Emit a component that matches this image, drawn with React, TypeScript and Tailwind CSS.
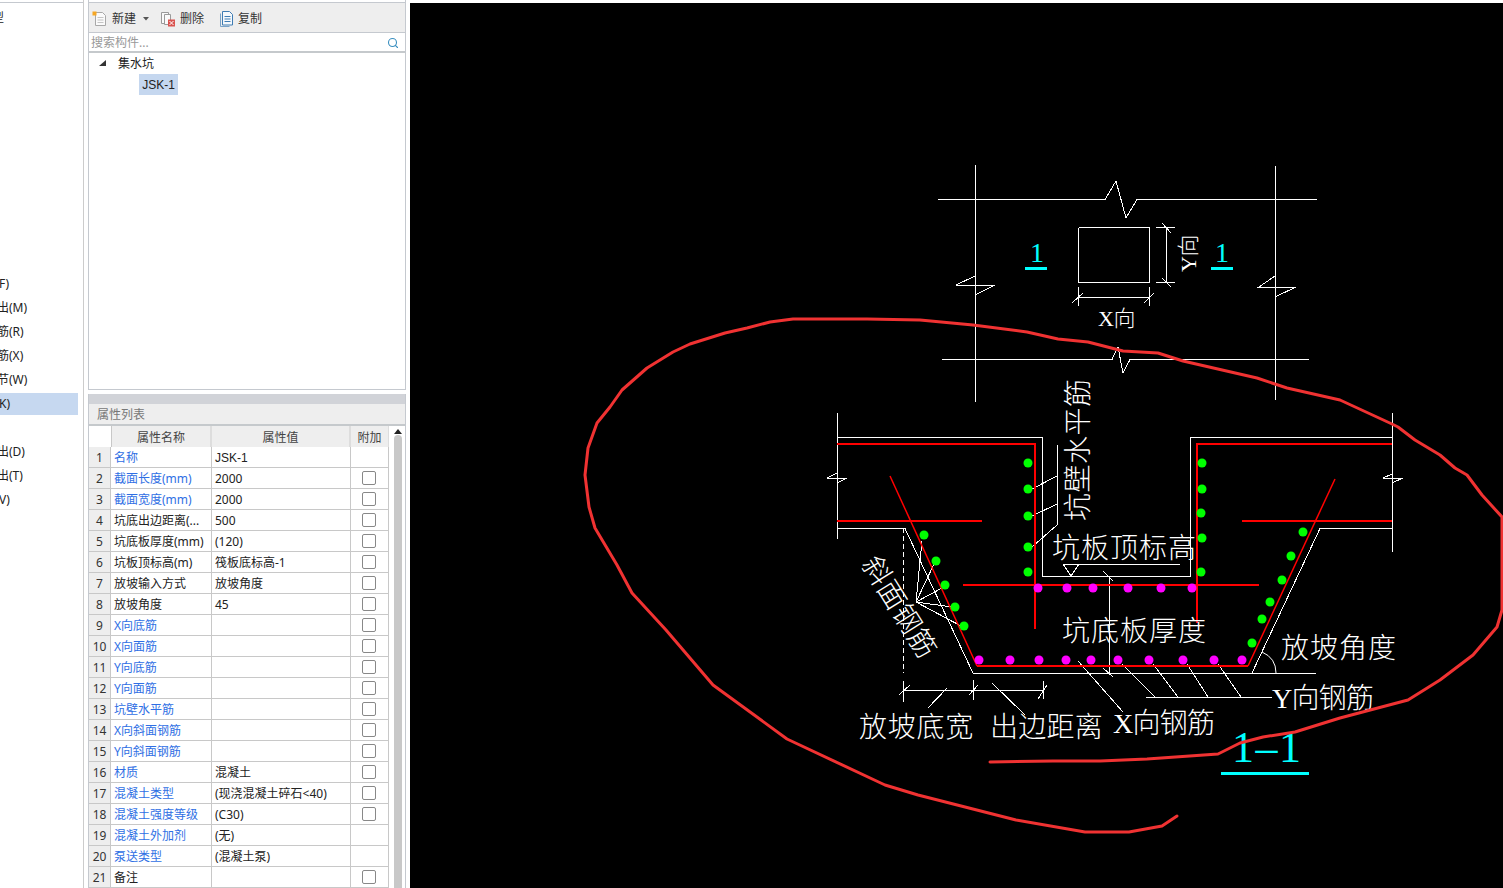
import React from "react";
import { Search } from "lucide-react";

const rows = [
  { name: "名称", value: "JSK-1", blue: true, box: false },
  { name: "截面长度(mm)", value: "2000", blue: true, box: true },
  { name: "截面宽度(mm)", value: "2000", blue: true, box: true },
  { name: "坑底出边距离(...", value: "500", blue: false, box: true },
  { name: "坑底板厚度(mm)", value: "(120)", blue: false, box: true },
  { name: "坑板顶标高(m)", value: "筏板底标高-1", blue: false, box: true },
  { name: "放坡输入方式", value: "放坡角度", blue: false, box: true },
  { name: "放坡角度", value: "45", blue: false, box: true },
  { name: "X向底筋", value: "", blue: true, box: true },
  { name: "X向面筋", value: "", blue: true, box: true },
  { name: "Y向底筋", value: "", blue: true, box: true },
  { name: "Y向面筋", value: "", blue: true, box: true },
  { name: "坑壁水平筋", value: "", blue: true, box: true },
  { name: "X向斜面钢筋", value: "", blue: true, box: true },
  { name: "Y向斜面钢筋", value: "", blue: true, box: true },
  { name: "材质", value: "混凝土", blue: true, box: true },
  { name: "混凝土类型", value: "(现浇混凝土碎石<40)", blue: true, box: true },
  { name: "混凝土强度等级", value: "(C30)", blue: true, box: true },
  { name: "混凝土外加剂", value: "(无)", blue: true, box: false },
  { name: "泵送类型", value: "(混凝土泵)", blue: true, box: false },
  { name: "备注", value: "", blue: false, box: true },
];

// white CAD linework, in page coordinates
const whiteLines = [
  "938,199.5 1105,199.5 1116,181 1126,218 1137,199.5 1317,199.5",
  "942,359.5 1112,359.5 1118,347 1123,373 1130,359.5 1309,359.5",
  "975.5,165 975.5,402",
  "1275.5,166 1275.5,400",
  "975,276 956,285 995,285 975,295",
  "1275,276 1259,287 1296,287 1275,297",
  "1078.5,227.5 1149.5,227.5 1149.5,282.5 1078.5,282.5 1078.5,227.5",
  "1166,227 1166,283",
  "1156,227.5 1175,227.5",
  "1156,282.5 1175,282.5",
  "1162,223 1171,233",
  "1162,278 1171,287",
  "1078,297 1150,297",
  "1078.5,287 1078.5,306",
  "1149.5,287 1149.5,306",
  "1072,303 1083,293",
  "1144,303 1154,293",
  "837.5,413 837.5,539",
  "837,473 827,478 847,478 837,483",
  "837,437.5 1042.5,437.5 1042.5,576.5 1190.5,576.5 1190.5,437.5 1392,437.5",
  "837,528.5 905,528.5 973,673 1316,673",
  "1392,528.5 1320,528.5 1252,673",
  "1392.5,413 1392.5,552",
  "1392,474 1383,478 1403,478 1392,483",
  "1057,445 1057,525 1032,547",
  "1057,476 1032,489",
  "1057,504 1032,516",
  "1063,564 1180,564",
  "1063,564 1071,576 1079,564",
  "1109.5,577 1109.5,673",
  "1103,571 1113,581",
  "1103,668 1113,677",
  "922,541 916,602",
  "934,564 916,602",
  "942,588 916,602",
  "952,607 916,602",
  "961,626 916,602",
  "903,690 1043,690",
  "903,681 903,702",
  "973.5,680 973.5,700",
  "1043,681 1043,699",
  "899,695 910,685",
  "969,695 978,685",
  "1038,699 1047,685",
  "947,688 928,708",
  "992,683 1025,715",
  "1078,661 1123,712",
  "1146,697 1272,697",
  "1122,664 1155,697",
  "1153,664 1178,697",
  "1187,664 1208,697",
  "1218,664 1241,697",
];

const redThick = [
  "837,444 1035,444 1035,629",
  "1392,444 1197,444 1197,623",
  "963,585 1259,585",
  "837,521 982,521",
  "1242,521 1392,521",
  "977,666 1248,666",
];

const redThin = ["890,476 977,666", "1248,666 1335,479"];

const greenDots = [
  [1028, 463], [1028, 489], [1028, 516], [1028, 547], [1028, 572],
  [1202, 463], [1202, 489], [1201, 513], [1202, 538], [1201, 572],
  [924, 535], [936, 561], [945, 585], [955, 607], [964, 626],
  [1303, 532], [1291, 556], [1282, 580], [1270, 602], [1262, 619], [1252, 643],
];

const pinkDots = [
  [1038, 588], [1067, 588], [1093, 588], [1128, 588], [1161, 588], [1192, 588],
  [979, 660], [1010, 660], [1039, 660], [1066, 660], [1091, 660], [1118, 660],
  [1149, 660], [1183, 660], [1214, 660], [1242, 660],
];

// the hand-drawn marker loop
const marker =
  "1177,816 1162,826 1129,832 1085,832 1016,820 918,795 885,785 787,739 713,685 666,630 632,593 617,565 595,528 589,507 585,475 588,448 597,423 610,407 622,390 647,368 673,352 690,344 725,333 747,328 770,322 793,319 867,319 920,320 973,325 1027,332 1058,339 1088,342 1123,351 1158,353 1183,361 1257,378 1287,388 1340,400 1392,424 1398,427 1415,440 1440,455 1455,468 1467,475 1482,495 1502,517 1502,610 1497,627 1473,655 1440,680 1408,700 1340,718 1295,732 1263,737 1240,743 1218,754 1147,759 1100,761 1053,761 990,762";

const labels = [
  { text: "坑板顶标高", x: 1052, y: 558, gap: 1 },
  { text: "坑底板厚度", x: 1062, y: 641, gap: 1 },
  { text: "放坡角度", x: 1281, y: 658, gap: 1 },
  { text: "Y向钢筋", x: 1272, y: 708, gap: -0.75 },
  { text: "X向钢筋", x: 1113, y: 733, gap: -0.75 },
  { text: "放坡底宽", x: 859, y: 737, gap: 0.75 },
  { text: "出边距离", x: 990, y: 737, gap: 0.25 },
];

function Drawing() {
  return (
    <svg viewBox="410 3 1093 885" className="block h-[885px] w-[1093px]">
      <g fill="none" stroke="#ffffff" strokeWidth="1" shapeRendering="crispEdges">
        {whiteLines.map((p) => (
          <polyline key={p} points={p} />
        ))}
        <line x1="903" y1="528" x2="903" y2="673" strokeDasharray="5 3" />
        <path d="M1262 652 Q1276 658 1276 673" shapeRendering="auto" />
      </g>
      <g fill="none" stroke="#ff0000" strokeWidth="2.5" shapeRendering="crispEdges">
        {redThick.map((p) => (
          <polyline key={p} points={p} />
        ))}
      </g>
      <g fill="none" stroke="#ff0000" strokeWidth="1.5">
        {redThin.map((p) => (
          <polyline key={p} points={p} />
        ))}
      </g>
      {greenDots.map(([x, y]) => (
        <circle key={`${x}-${y}`} cx={x} cy={y} r="4.5" fill="#00ff00" />
      ))}
      {pinkDots.map(([x, y]) => (
        <circle key={`${x}-${y}`} cx={x} cy={y} r="4.5" fill="#ff00ff" />
      ))}

      <g
        fill="#ffffff"
        fontWeight="300"
        fontSize="28"
        className="font-['Liberation_Serif','Noto_Sans_CJK_SC',serif]"
      >
        {labels.map((l) => (
          <text key={l.text} x={l.x} y={l.y} letterSpacing={l.gap}>
            {l.text}
          </text>
        ))}
        <text transform="translate(1088 521) rotate(-90)" letterSpacing="0.5">
          坑壁水平筋
        </text>
        <text transform="translate(861 564) rotate(58)" letterSpacing="0.5">
          斜面钢筋
        </text>
        <text x="1098" y="326" fontSize="22" letterSpacing="-0.5">
          X向
        </text>
        <text transform="translate(1196 272) rotate(-90)" fontSize="22" letterSpacing="-0.5">
          Y向
        </text>
      </g>

      <g fill="#00ffff" className="font-['Liberation_Serif',serif]">
        <text x="1030" y="262" fontSize="28">
          1
        </text>
        <text x="1215" y="262" fontSize="28">
          1
        </text>
        <text x="1232" y="762" fontSize="44" letterSpacing="1.5">
          1–1
        </text>
      </g>
      <g fill="#00ffff">
        <rect x="1025" y="267" width="22" height="3" />
        <rect x="1211" y="267" width="22" height="3" />
        <rect x="1221" y="772" width="88" height="3" />
      </g>

      <polyline
        points={marker}
        fill="none"
        stroke="#f03232"
        strokeWidth="3"
        strokeLinejoin="round"
        strokeLinecap="round"
      />
    </svg>
  );
}

function NewIcon() {
  return (
    <svg width="16" height="16" viewBox="0 0 16 16" fill="none">
      <path d="M3.5 1.5h7l3 3v10h-10z" fill="#fafafa" stroke="#a8a8a8" />
      <path d="M5.5 6.5h6M5.5 9h6M5.5 11.5h6" stroke="#c4c4c4" />
      <rect x="0.5" y="0.5" width="4" height="4" fill="#f5a623" />
    </svg>
  );
}

function DeleteIcon() {
  return (
    <svg width="16" height="16" viewBox="0 0 16 16" fill="none">
      <path d="M1.5 1.5h7v11h-7z" fill="#fafafa" stroke="#9a9a9a" />
      <path d="M4.5 3.5h6v10h-6z" fill="#fafafa" stroke="#9a9a9a" />
      <rect x="8" y="8.5" width="7" height="7" fill="#d9534f" />
      <path d="M9.5 10l4 4M13.5 10l-4 4" stroke="#ffffff" />
    </svg>
  );
}

function CopyIcon() {
  return (
    <svg width="14" height="16" viewBox="0 0 14 16" fill="none">
      <path d="M0.5 2.5v13h9" stroke="#7aa3c8" />
      <path d="M2.5 0.5h7l3 3v10.5h-10z" fill="#f4f8fc" stroke="#3f7cb3" />
      <path d="M4.5 5.5h6M4.5 8h6M4.5 10.5h6" stroke="#3f7cb3" />
    </svg>
  );
}

function SideItem({ text, shift, selected }: { text: string; shift: string; selected?: boolean }) {
  return (
    <div className="h-6 flex items-center">
      <div className={`w-[78px] h-[22px] flex items-center overflow-hidden ${selected ? "bg-[#c6d8f0]" : ""}`}>
        <span className={`whitespace-nowrap ${shift}`}>{text}</span>
      </div>
    </div>
  );
}

function Sidebar() {
  return (
    <div className="w-[84px] shrink-0 border-r border-[#cccccc] text-xs text-[#222222]">
      <div className="mt-[2px] h-px bg-[#c5c9cf]" />
      <div className="mt-[3px] h-6 flex items-center overflow-hidden">
        <span className="-ml-[8px]">型</span>
      </div>
      <div className="h-[242px]" />
      <SideItem text="F)" shift="-ml-[1px]" />
      <SideItem text="出(M)" shift="-ml-[3px]" />
      <SideItem text="筋(R)" shift="-ml-[3px]" />
      <SideItem text="筋(X)" shift="-ml-[3px]" />
      <SideItem text="节(W)" shift="-ml-[3px]" />
      <SideItem text="K)" shift="-ml-[1px]" selected />
      <div className="h-6" />
      <SideItem text="出(D)" shift="-ml-[3px]" />
      <SideItem text="出(T)" shift="-ml-[3px]" />
      <SideItem text="V)" shift="-ml-[1px]" />
    </div>
  );
}

function ComponentPanel() {
  return (
    <div className="h-[390px] flex flex-col border-x border-b border-[#c5c9cf]">
      <div className="mt-[2px] h-px bg-[#c5c9cf]" />
      <div className="h-[30px] pt-[2px] flex items-center bg-[#eeeeee] border-b border-[#c5c9cf] text-xs text-[#333333]">
        <span className="ml-[3px] flex items-center gap-[4px]">
          <NewIcon />
          新建
        </span>
        <svg width="6" height="4" viewBox="0 0 6 4" className="ml-[7px]">
          <path d="M0 0h6L3 3.5z" fill="#555555" />
        </svg>
        <span className="ml-[11px] flex items-center gap-[4px]">
          <DeleteIcon />
          删除
        </span>
        <span className="ml-[16px] flex items-center gap-[4px]">
          <CopyIcon />
          复制
        </span>
      </div>
      <div className="h-[20px] pt-px flex items-center justify-between pl-[2px] pr-[6px] text-xs text-[#999999] border-b-2 border-[#c5c9cc]">
        <span>搜索构件...</span>
        <Search size={12} strokeWidth={2.2} className="text-[#3a8fc0]" />
      </div>
      <div className="flex-1 text-xs text-[#222222]">
        <div className="h-[21px] flex items-center">
          <svg width="7" height="7" viewBox="0 0 7 7" className="ml-[10px]">
            <path d="M7 0v6H0z" fill="#333333" />
          </svg>
          <span className="ml-[12px]">集水坑</span>
        </div>
        <div className="ml-[50px] w-[39px] h-[21px] flex items-center justify-center bg-[#c5d7ef] font-['Liberation_Sans',sans-serif]">
          JSK-1
        </div>
      </div>
    </div>
  );
}

function PropertyTable() {
  return (
    <div className="flex-1 flex min-h-0">
      <div className="w-[300px] shrink-0 text-xs">
        <div className="h-[21px] flex text-center text-[#444444]">
          <div className="w-[22px] shrink-0" />
          <div className="w-[101px] shrink-0 pt-[2px] bg-[#eeeeee] border-r-2 border-[#dddddd] border-l border-l-[#c8c8c8] flex items-center justify-center">
            属性名称
          </div>
          <div className="w-[139px] shrink-0 pt-[2px] bg-[#eeeeee] border-r-2 border-[#dddddd] flex items-center justify-center">
            属性值
          </div>
          <div className="flex-1 pt-[2px] bg-[#eeeeee] flex items-center justify-center border-r border-[#dddddd]">
            附加
          </div>
        </div>
        {rows.map((r, i) => (
          <div key={r.name} className="h-[21px] flex border-b border-[#c8c8c8]">
            <div className="w-[22px] shrink-0 pt-px bg-[#eeeeee] border-r border-[#c8c8c8] flex items-center justify-center text-[#333333]">
              {i + 1}
            </div>
            <div
              className={`w-[101px] shrink-0 pt-px border-r border-[#c8c8c8] pl-[3px] flex items-center whitespace-nowrap overflow-hidden ${
                r.blue ? "text-[#2f6fe4]" : "text-[#222222]"
              }`}
            >
              {r.name}
            </div>
            <div
              className={`w-[139px] shrink-0 pt-px border-r border-[#c8c8c8] pl-[3px] flex items-center whitespace-nowrap overflow-hidden text-[#222222] ${
                r.value === "JSK-1" ? "font-['Liberation_Sans',sans-serif]" : ""
              }`}
            >
              {r.value}
            </div>
            <div className="flex-1 pr-[2px] border-r border-[#c8c8c8] flex items-center justify-center">
              {r.box && <div className="w-[14px] h-[14px] rounded-[2px] border border-[#888888] bg-white" />}
            </div>
          </div>
        ))}
      </div>
      <div className="flex-1 flex flex-col items-center pt-[3px] pl-[2px]">
        <svg width="8" height="5" viewBox="0 0 8 5">
          <path d="M0 5L4 0l4 5z" fill="#222222" />
        </svg>
        <div className="mt-[1px] w-2 flex-1 rounded-t-[4px] bg-[#c8c8c8]" />
      </div>
    </div>
  );
}

export default function App() {
  return (
    <div className="w-[1503px] h-[888px] flex overflow-hidden bg-white font-['Noto_Sans','Noto_Sans_CJK_SC',sans-serif]">
      <Sidebar />
      <div className="ml-[4px] w-[318px] shrink-0 flex flex-col">
        <ComponentPanel />
        <div className="mt-[4px] flex-1 min-h-0 flex flex-col border-x border-[#c5c9cf]">
          <div className="h-[10px] bg-[#d1d3d8]" />
          <div className="h-[22px] pt-px flex items-center pl-[8px] bg-[#eeeeee] border-b-2 border-[#c5c9cc] text-xs text-[#777777]">
            属性列表
          </div>
          <PropertyTable />
        </div>
      </div>
      <div className="w-[4px] shrink-0" />
      <div className="flex-1 mt-[3px] bg-black">
        <Drawing />
      </div>
    </div>
  );
}
